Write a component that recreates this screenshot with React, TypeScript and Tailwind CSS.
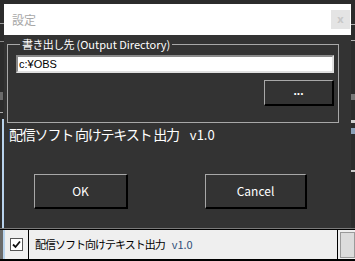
import React from 'react';

const jp = { fontFamily: '"Noto Sans CJK JP", "Noto Sans", sans-serif' };

// background window bits peeking out around the dialog
const Backdrop = () => (
  <div className="absolute inset-0">
    <div className="absolute left-0 top-[23px] h-[1px] w-[4px] bg-[#9a9a9a]" />
    <div className="absolute left-0 top-[41px] h-[1px] w-[4px] bg-[#8a8a8a]" />
    <div className="absolute left-0 top-[92px] h-[8px] w-[3px] bg-[#6a6a6a]" />
    <div className="absolute left-0 top-[112px] h-[1px] w-[3px] bg-[#aaaaaa]" />
    <div className="absolute left-[2px] top-[119px] bottom-0 w-[2px] bg-[#b9d3ec]" />
    <div className="absolute right-0 top-[24px] h-[1px] w-[4px] bg-[#b0b0b0]" />
    <div className="absolute right-0 top-[40px] h-[1px] w-[4px] bg-[#b0b0b0]" />
    <div className="absolute right-0 top-[94px] h-[6px] w-[4px] bg-[#777]" />
    <div className="absolute right-0 top-[120px] h-[3px] w-[4px] bg-[#cfcfcf]" />
    <div className="absolute right-0 top-[128px] h-[6px] w-[4px] bg-[#8aa0b8]" />
    <div className="absolute right-0 top-[170px] h-[2px] w-[4px] bg-[#c8c8c8]" />
  </div>
);

const BottomRow = () => (
  <div className="absolute left-0 right-0 top-[228px] bottom-0 flex border-t border-[#7a7a7a]">
    <div className="flex flex-1 border-t border-b-2 border-black bg-[#efefef]">
      <div className="w-[3px] bg-[#6a6a6a]" />
      <div className="w-[2px] bg-[#b9d3ec]" />
      <div className="flex w-[24px] items-center justify-center border-r border-black">
        <div className="flex h-[13px] w-[13px] items-center justify-center border border-[#555] bg-white">
          <svg width="9" height="9" viewBox="0 0 9 9">
            <path d="M1 4.5 L3.5 7 L8 1.5" stroke="#111" strokeWidth="1.8" fill="none" />
          </svg>
        </div>
      </div>
      <div className="flex flex-1 items-center pl-[6px] text-[11px] text-black" style={jp}>
        <span className="tracking-[-1px]">配信ソフト向けテキスト出力</span>
        <span className="ml-[7px] text-[#2f4f7a]">v1.0</span>
      </div>
      <div className="w-[1px] bg-black" />
      <div className="ml-[2px] mt-[2px] mb-[1px] w-[15px] border border-[#9a9a9a] bg-[#dcdcdc]" />
    </div>
  </div>
);

const Win98Button = ({ label, className }: { label: string; className: string }) => (
  <button
    className={`flex items-center justify-center border-t border-l border-[#a8a8a8] border-r-2 border-b-2 border-r-black border-b-black bg-[#333333] text-[12px] text-white ${className}`}
    style={jp}
  >
    {label}
  </button>
);

const SettingsDialog = () => (
  <div className="absolute left-[4px] top-[4px] flex h-[224px] w-[347px] flex-col bg-[#333333]">
    <div className="flex h-[31px] items-center bg-white pl-[8px] pr-[1px]">
      <span className="flex-1 text-[12px] text-[#a8a8a8]" style={jp}>設定</span>
      <div className="flex h-[19px] w-[19px] items-center justify-center bg-[#e4e4e4] text-[11px] font-bold text-[#c8c8c8]">
        x
      </div>
    </div>

    <fieldset className="ml-[3px] mt-[2px] w-[332px] border border-[#a8a8a8] pl-[8px] pr-[4px] pb-[16px]">
      <legend className="ml-[4px] px-[2px] text-[11px] leading-[14px] text-white" style={jp}>
        <span className="tracking-[-0.6px]">書き出し先</span> (Output Directory)
      </legend>
      <div
        className="mt-[4px] flex h-[18px] items-center border-t-2 border-l-2 border-t-[#8a8a8a] border-l-[#8a8a8a] border-r-2 border-b-2 border-r-[#e0e0e0] border-b-[#e0e0e0] bg-white pl-[1px] text-[11px] text-black"
        style={{ fontFamily: '"Liberation Sans", "Noto Sans CJK JP", sans-serif' }}
      >
        c:¥OBS
      </div>
      <div className="mt-[7px] flex justify-end">
        <button
          className="flex h-[26px] w-[70px] items-start justify-center border-t border-l border-[#a8a8a8] border-r-2 border-b-2 border-r-black border-b-black bg-[#333333] pt-[4px] text-[12px] font-bold leading-[12px] text-white"
          style={{ fontFamily: '"Liberation Sans", sans-serif' }}
        >
          ...
        </button>
      </div>
    </fieldset>

    <div className="ml-[5px] mt-[3px] flex items-baseline text-[14px] leading-[17px] text-white" style={jp}>
      <span className="tracking-[-1.2px]">配信ソフト 向けテキスト 出力</span>
      <span className="ml-[11px] text-[13px]">v1.0</span>
    </div>

    <div className="mt-[31px] flex">
      <Win98Button label="OK" className="ml-[30px] h-[35px] w-[94px]" />
      <Win98Button label="Cancel" className="ml-[77px] h-[35px] w-[102px]" />
    </div>
  </div>
);

export default function App() {
  return (
    <div className="relative h-[261px] w-[355px] overflow-hidden bg-[#2c2c2c]">
      <Backdrop />
      <BottomRow />
      <SettingsDialog />
    </div>
  );
}
